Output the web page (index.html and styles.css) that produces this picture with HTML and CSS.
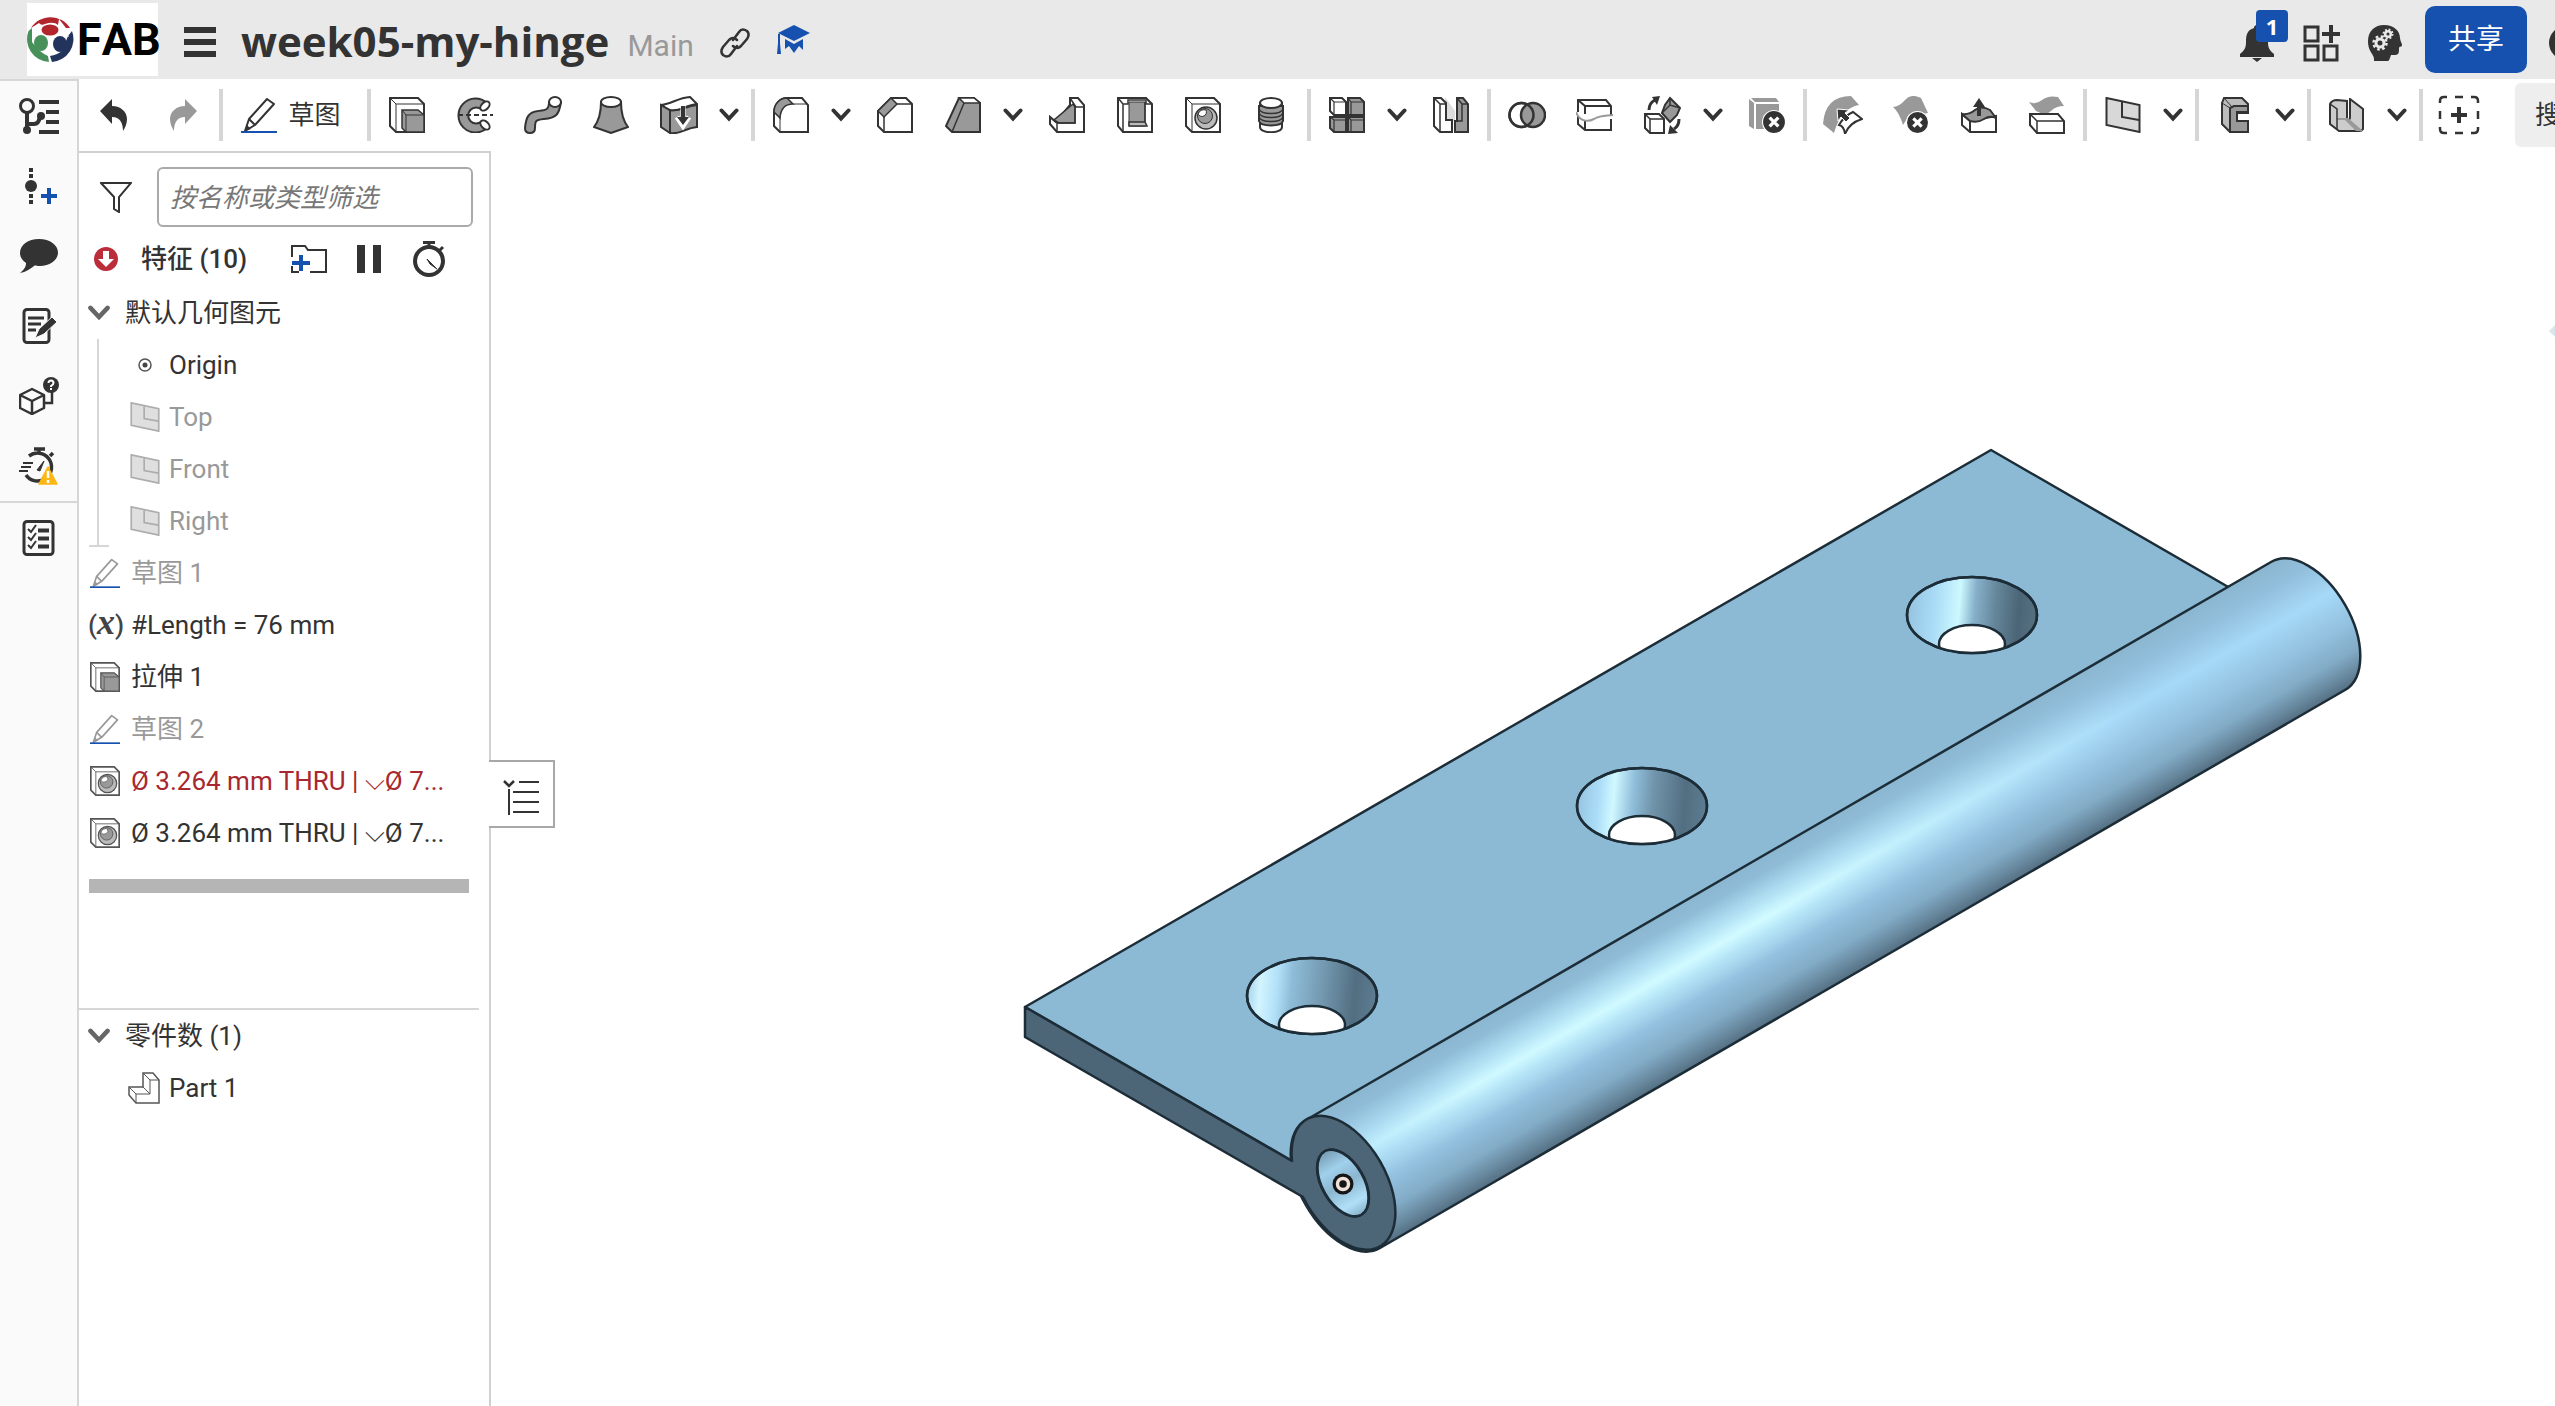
FILE: index.html
```html
<!DOCTYPE html>
<html lang="zh-CN">
<head>
<meta charset="utf-8">
<meta name="viewport" content="width=device-width, initial-scale=1">
<title>week05-my-hinge | Main</title>
<link rel="stylesheet" href="styles.css">
</head>
<body>
<svg class="defs" aria-hidden="true">
  <symbol id="chev" viewBox="0 0 20 14"><path d="M2.500 2.500l7.500 8 7.500-8" fill="none" stroke="currentColor" stroke-width="4" stroke-linecap="round"/></symbol>
  <symbol id="pencil" viewBox="0 0 36 36"><path d="M4 34L8 22 26 2l7 5L14 28zM8 22l6 6M26 2l7 5" fill="#fff" stroke="currentColor" stroke-width="2" stroke-linejoin="round"/><path d="M4 34l2-6 4 4z" fill="currentColor"/><path class="pencil-base" d="M0 35h36" stroke-width="2"/></symbol>
  <symbol id="extrude" viewBox="0 0 36 36"><path d="M1 1h28l6 6v28H7l-6-6z" fill="#fff" stroke="currentColor" stroke-width="2"/><path d="M1 1l6 6h28M7 7v28" fill="none" stroke="currentColor"/><path d="M13 13h16l6 5v17H17l-4-4z" fill="#999" stroke="currentColor" stroke-width="1.500"/><path d="M13 13l4 5h18M17 18v17" fill="none" stroke="currentColor"/></symbol>
  <symbol id="hole" viewBox="0 0 36 36"><path d="M1 1h28l6 6v28H7l-6-6z" fill="#fff" stroke="currentColor" stroke-width="2"/><path d="M1 1l6 6h28M7 7v28" fill="none" stroke="currentColor"/><ellipse cx="21" cy="21" rx="11" ry="11" fill="#bbb" stroke="currentColor" stroke-width="1.500"/><circle cx="20" cy="19" r="7.500" fill="#999" stroke="currentColor"/><path d="M13 17a4 4 0 0 0 8-4 7 7 0 0 0-8 4z" fill="#fff" stroke="currentColor"/></symbol>
  <symbol id="plane" viewBox="0 0 36 36"><path d="M1.500 1l33 7v27l-33-7z" fill="#d8d8d8" stroke="currentColor" stroke-width="2"/><path d="M17 5v15l17 3" fill="none" stroke="currentColor" stroke-width="2"/></symbol>
  <symbol id="xbadge" viewBox="0 0 22 22"><circle cx="11" cy="11" r="11" fill="#fff"/><circle cx="11" cy="11" r="10" fill="#333"/><path d="M7 7l8 8M15 7l-8 8" stroke="#fff" stroke-width="3"/></symbol>
</svg>

<header class="topbar">
  <a class="logo" href="#" aria-label="FAB">
    <svg width="47" height="47" viewBox="0 0 47 47" aria-hidden="true"><circle cx="23.500" cy="23.500" r="22.500" fill="#fff"/><path d="M4 12A23 23 0 0 1 43 12L39 12 32 3 31 9Q27 5 18 8Q14 10 12 7z" fill="#b3252c"/><ellipse cx="23" cy="14" rx="8.500" ry="5.500" fill="#b3252c"/><path d="M1.500 15A23 23 0 0 0 22 46L21 40Q12 36 5 26L5 12z" fill="#47905a"/><ellipse cx="14" cy="27" rx="7" ry="8" fill="#47905a"/><path d="M45 15A23 23 0 0 1 25 46L23 40Q30 39 35 35L41 20z" fill="#23345c"/><ellipse cx="33" cy="28" rx="7" ry="8" fill="#23345c"/><path d="M37 11l5 10-7-3z" fill="#fff"/></svg>
    <span>FAB</span>
  </a>
  <button class="plain menu" aria-label="菜单"><svg width="32" height="32" viewBox="0 0 32 32"><path d="M0 4h32M0 16h32M0 28h32" stroke="#333" stroke-width="6"/></svg></button>
  <h1>week05-my-hinge</h1>
  <span class="workspace">Main</span>
  <button class="plain link" aria-label="复制链接"><svg width="30" height="30" viewBox="0 0 30 30" fill="none" stroke="#333" stroke-width="2.500" stroke-linecap="round"><path d="M13 12l6-8c2-3 5-3 8-1 2 2 2 5 0 8l-6 7c-3 3-6 2-8 0"/><path d="M17 18l-6 8c-2 3-5 3-8 1-2-2-2-5 0-8l6-7c3-3 6-2 8 0"/></svg></button>
  <button class="plain learn" aria-label="学习中心"><svg width="34" height="30" viewBox="0 0 34 30" fill="#1651b0"><path d="M17 0l16 8-16 8L1 8zM8 14l9 5 9-5v11l-4-4-5 7-5-7-4 3zM1 9h2v9l1 11H0l1-11z"/></svg></button>

  <div class="account">
    <button class="plain bell" aria-label="通知"><svg width="34" height="38" viewBox="0 0 34 38" fill="#333"><path d="M17 1c3 0 3 3 3 3 7 2 8 7 8 14 0 5 1 8 6 12v3H0v-3c5-4 6-7 6-12 0-7 1-12 8-14 0 0 0-3 3-3zM12 34h10l-5 4z"/></svg><span class="badge">1</span></button>
    <button class="plain apps" aria-label="应用"><svg width="38" height="38" viewBox="0 0 38 38" fill="none" stroke="#333" stroke-width="3"><path d="M3 3h13v14H3zM3 22h13v14H3zM22 22h13v14H22z"/><path d="M29 1v18M20 10h18" stroke-width="4"/></svg></button>
    <button class="plain ai" aria-label="AI 顾问"><svg width="34" height="38" viewBox="0 0 34 38"><path d="M6 37c1-7-6-8-6-20C0 7 7 1 16 1c10 0 16 6 16 13 0 3 2 5 2 7 0 3-3 0-3 4 0 6-1 6-8 6-1 3-2 6-3 6z" fill="#333"/><circle cx="12" cy="19" r="4" fill="none" stroke="#e9e9e9" stroke-width="3"/><circle cx="12" cy="19" r="6.500" fill="none" stroke="#e9e9e9" stroke-width="2.500" stroke-dasharray="2.600 2.500"/><circle cx="20" cy="10" r="2.800" fill="none" stroke="#e9e9e9" stroke-width="2.500"/><circle cx="20" cy="10" r="4.500" fill="none" stroke="#e9e9e9" stroke-width="2" stroke-dasharray="1.800 1.740"/></svg></button>
    <button class="share">共享</button>
    <button class="avatar" aria-label="帮助"></button>
  </div>
</header>

<div class="workarea">
  <nav class="rail" aria-label="侧栏">
    <button class="plain" aria-label="版本与历史"><svg width="40" height="36" viewBox="0 0 40 36" fill="none" stroke="#333"><circle cx="8" cy="8" r="6.500" stroke-width="3"/><path d="M8 15v17M8 26h7q5 0 6-8M20 4h20M27 14h13M27 24h13M20 34h20" stroke-width="4"/><circle cx="8" cy="32" r="4" fill="#333" stroke="none"/><circle cx="22" cy="18" r="4" fill="#333" stroke="none"/></svg></button>
    <button class="plain" aria-label="创建版本"><svg width="40" height="36" viewBox="0 0 40 36"><path d="M12 0v36" stroke="#333" stroke-width="4" stroke-dasharray="4 2 4 16"/><circle cx="12" cy="18" r="6" fill="#333"/><path d="M22 28h16M30 20v16" stroke="#1651b0" stroke-width="4"/></svg></button>
    <button class="plain" aria-label="评论"><svg width="40" height="36" viewBox="0 0 40 36"><path d="M20 1c11 0 19 6 19 13.500S31 28 21 28c-4 0-5-1-6 0-4 3-8 6-14 7 5-4 6-7 6-10-4-3-6-6-6-10C1 7 9 1 20 1z" fill="#333"/></svg></button>
    <button class="plain" aria-label="注释"><svg width="40" height="36" viewBox="0 0 40 36" fill="none" stroke="#333"><rect x="5" y="1.500" width="25" height="33" rx="3" stroke-width="3"/><path d="M9 10h16M9 16h13M9 22h8" stroke-width="3"/><path d="M16 30l4-9 13-12 5 5-13 12z" fill="#333" stroke="#fafafa" stroke-width="1"/></svg></button>
    <button class="plain" aria-label="配置"><svg width="40" height="38" viewBox="0 0 40 38" fill="none" stroke="#333"><path d="M1 18l12-6 12 6v13l-12 6-12-6zM1 18l12 6 12-6M13 24v13" stroke-width="2.500" stroke-linejoin="round"/><path d="M26 26h7V14" stroke-width="2.500"/><circle cx="32" cy="8" r="8" fill="#333" stroke="none"/><path d="M29.500 6q0-2.500 2.500-2.500T34.500 6q0 1.500-2.500 3v1M32 11v2" stroke="#fff" stroke-width="2"/></svg></button>
    <button class="plain" aria-label="性能"><svg width="40" height="38" viewBox="0 0 40 38" fill="none" stroke="#333"><path d="M7 28a14 14 0 1 0 3-19M20 1v6M15 2h11M31 9l3-3" stroke-width="3.500"/><path d="M4 16h10M2 20h10M0 24h9" stroke-width="2"/><path d="M18 23l7-9-4 10z" fill="#333"/><path d="M29 20l9 17H20z" fill="#fcb713" stroke="#fcb713" stroke-width="1.500" stroke-linejoin="round"/><path d="M29 24v7M29 33v3" stroke="#fff" stroke-width="2.500"/></svg></button>
    <hr>
    <button class="plain" aria-label="检查清单"><svg width="40" height="36" viewBox="0 0 40 36" fill="none" stroke="#333"><rect x="5" y="1.500" width="29" height="33" rx="3" stroke-width="3"/><path d="M9 9l3 3 5-7M9 17l3 3 5-7M9 25l3 3 5-7" stroke-width="2"/><path d="M19 10.500h11M19 18.500h11M19 26.500h11" stroke-width="4"/></svg></button>
  </nav>

  <div class="studio">
    <div class="toolbar" role="toolbar" aria-label="特征工具">
      <button class="tool wide" aria-label="撤消"><svg width="28" height="32" viewBox="0 0 28 32"><path d="M0 12L12 0v7c9 0 15 6 15 13 0 5-2 9-4 12 0-8-3-14-11-14v7z" fill="#333"/></svg></button>
      <button class="tool wide" aria-label="恢复"><svg width="28" height="32" viewBox="0 0 28 32"><path d="M28 12L16 0v7C7 7 1 13 1 20c0 5 2 9 4 12 0-8 3-14 11-14v7z" fill="#999"/></svg></button>
      <i class="sep"></i>
      <button class="tool sketch"><svg width="36" height="36"><use href="#pencil"/></svg><span>草图</span></button>
      <i class="sep"></i>
      <button class="tool" aria-label="拉伸"><svg width="36" height="36"><use href="#extrude"/></svg></button>
      <button class="tool" aria-label="旋转"><svg width="36" height="36" viewBox="0 0 36 36" stroke="#333" stroke-width="2"><path d="M30 6A17 17 0 1 0 30 31L25 24A8 8 0 1 1 25 13z" fill="#999"/><ellipse cx="28" cy="9" rx="3.500" ry="5.500" transform="rotate(45 28 9)" fill="#fff"/><ellipse cx="28" cy="28" rx="3.500" ry="5.500" transform="rotate(-45 28 28)" fill="#fff"/><path d="M1 18h35" stroke-dasharray="5 3"/></svg></button>
      <button class="tool" aria-label="扫掠"><svg width="38" height="38" viewBox="0 0 38 38" stroke="#333" stroke-width="2"><path d="M25 6c0 8-3 8-11 9C4 16 2 22 1 32c0 3 2 5 5 5s5-2 5-5c0-8 1-8 9-9 12-1 15-4 17-17z" fill="#999"/><ellipse cx="31" cy="6" rx="6" ry="5" fill="#fff"/></svg></button>
      <button class="tool" aria-label="放样"><svg width="36" height="38" viewBox="0 0 36 38" stroke="#333" stroke-width="2"><path d="M8 6c0 14-3 20-7 25l17 6 17-6C31 26 28 20 28 6z" fill="#999"/><ellipse cx="18" cy="6" rx="10" ry="5" fill="#fff"/></svg></button>
      <button class="tool" aria-label="加厚"><svg width="38" height="38" viewBox="0 0 38 38" stroke="#333" stroke-width="2"><path d="M1 9l9 5v23l-9-6zM10 14c10 2 15-4 27-5v22c-12 1-17 8-27 6z" fill="#999"/><path d="M1 9C12 8 17 2 30 1l7 7c-12 1-17 8-27 6z" fill="#fff"/><path d="M23 10v16M17 21l6 9 6-9" fill="none" stroke="#fff" stroke-width="5"/><path d="M21 10h4v11h4l-6 8-6-8h4z" fill="#333" stroke="none"/></svg></button>
      <button class="tool more" aria-label="更多"><svg width="20" height="14"><use href="#chev"/></svg></button>
      <i class="sep"></i>
      <button class="tool" aria-label="圆角"><svg width="36" height="36" viewBox="0 0 36 36" stroke="#333" stroke-width="2"><path d="M14 1h15l6 7v27H7l-6-6V16C1 7 7 1 14 1z" fill="#fff"/><path d="M14 1l6 6Q8 7 7 21l-6-6C1 7 7 1 14 1z" fill="#999" stroke-width="1.500"/><path d="M20 7h14M7 21v14" stroke-width="1" fill="none"/></svg></button>
      <button class="tool more" aria-label="更多"><svg width="20" height="14"><use href="#chev"/></svg></button>
      <button class="tool" aria-label="倒角"><svg width="36" height="36" viewBox="0 0 36 36" stroke="#333" stroke-width="2"><path d="M14 1h15l6 6v28H7l-6-6V14z" fill="#fff"/><path d="M14 1l6 6L7 20l-6-6z" fill="#999" stroke-width="1.500"/><path d="M20 7h14M7 20v15" stroke-width="1.500"/></svg></button>
      <button class="tool" aria-label="拔模"><svg width="36" height="36" viewBox="0 0 36 36" stroke="#333" stroke-width="2"><path d="M14 1h15l6 5v29H7l-6-6z" fill="#999"/><path d="M14 1h15l6 5H19z" fill="#fff" stroke-width="1.500"/><path d="M19 6L7 35" stroke-width="1.500"/></svg></button>
      <button class="tool more" aria-label="更多"><svg width="20" height="14"><use href="#chev"/></svg></button>
      <button class="tool" aria-label="加强筋"><svg width="36" height="36" viewBox="0 0 36 36" stroke="#333" stroke-width="2"><path d="M21 1h8l6 7v27H8l-7-8v-7l6 5 14-17z" fill="#fff"/><path d="M24 7L5 23l5 3h16V10z" fill="#999" stroke-width="1.500"/><path d="M8 26h18V10h8M1 20l7 6v9M21 1l6 9" fill="none" stroke-width="1.500"/></svg></button>
      <button class="tool" aria-label="抽壳"><svg width="36" height="36" viewBox="0 0 36 36" stroke="#333" stroke-width="2"><path d="M1 1h28l6 6v28H6l-5-6z" fill="#fff"/><path d="M1 1l5 6h5V3h18v4h6M6 7v28" fill="none" stroke-width="1.500"/><path d="M12 5h16v24h-16z" fill="#999" stroke-width="1"/><path d="M12 25h16l2 4H12zM28 5v20" fill="#bbb" stroke-width="1.500"/></svg></button>
      <button class="tool" aria-label="孔"><svg width="36" height="36"><use href="#hole"/></svg></button>
      <button class="tool" aria-label="外螺纹"><svg width="26" height="36" viewBox="0 0 26 36" stroke="#333" stroke-width="2" fill="#fff"><path d="M2 6v24c0 7 22 7 22 0V6z"/><path d="M1 9v15c2 6 22 6 24 0V9z" fill="#999"/><path d="M1 12c2 6 22 6 24 0M1 16c2 6 22 6 24 0M1 20c2 6 22 6 24 0" fill="none" stroke-width="1.500"/><ellipse cx="13" cy="6" rx="11" ry="5"/></svg></button>
      <i class="sep"></i>
      <button class="tool" aria-label="阵列"><svg width="36" height="36" viewBox="0 0 36 36" stroke="#333" stroke-width="2"><path d="M1 1h12l4 4v13H5l-4-4z" fill="#fff"/><path d="M19 1h12l4 4v13H19zM1 20h16v15H5l-4-4zM19 20h16v15H19z" fill="#999"/><path d="M1 1l4 4h12M5 5v13M19 1l3 4h13M22 5v13M1 20l4 3h12M5 23v12M19 20l3 3h13M22 23v12" fill="none" stroke-width="1.200"/></svg></button>
      <button class="tool more" aria-label="更多"><svg width="20" height="14"><use href="#chev"/></svg></button>
      <button class="tool" aria-label="镜像"><svg width="36" height="36" viewBox="0 0 36 36" stroke="#333" stroke-width="2"><path d="M12 0l10 14v10H12z" fill="#ddd" stroke="none"/><path d="M1 1h7l5 5v17h6v12H7l-6-6z" fill="#fff"/><path d="M24 1h6l5 6v28H22V24h2z" fill="#999"/><path d="M1 1l6 6h6M7 7v28M24 1l5 6h6M29 7v17h-5" fill="none" stroke-width="1.500"/></svg></button>
      <i class="sep"></i>
      <button class="tool" aria-label="布尔"><svg width="38" height="30" viewBox="0 0 38 30" stroke="#333" stroke-width="2.500"><circle cx="13.500" cy="15" r="12" fill="#fff"/><circle cx="25" cy="15" r="12" fill="#999"/><circle cx="13.500" cy="15" r="12" fill="none"/></svg></button>
      <button class="tool" aria-label="分割"><svg width="38" height="34" viewBox="0 0 38 34" stroke="#333" stroke-width="2" fill="none"><path d="M2 14V2h28l5 6v9M35 21v11H9l-7-6v-8M2 2l7 6h26M9 8v8M9 23v9"/><path d="M0 14c4 10 12 10 18 7 7-4 11-3 19-4" stroke="#999"/></svg></button>
      <button class="tool" aria-label="变换"><svg width="38" height="38" viewBox="0 0 38 38" stroke="#333" stroke-width="2"><path d="M1 18h14l5 5v14H6l-5-5z" fill="#fff"/><path d="M1 18l5 5h14M6 23v14" fill="none" stroke-width="1.500"/><path d="M26 2l10 10-3 7-7 7-8-9 3-8z" fill="#999"/><path d="M18 17l8-8 10 3M26 9V2" fill="none" stroke-width="1.500"/><path d="M5 14q0-7 6-10" fill="none" stroke-width="3"/><path d="M8 1l8-1-3 9z" fill="#333" stroke="none"/><path d="M35 23q0 7-5 10" fill="none" stroke-width="3"/><path d="M24 38l2-9 8 8z" fill="#333" stroke="none"/></svg></button>
      <button class="tool more" aria-label="更多"><svg width="20" height="14"><use href="#chev"/></svg></button>
      <button class="tool" aria-label="删除零件"><svg width="36" height="36" viewBox="0 0 36 36"><path d="M0 2l5 4v26l-5-3zM2 1h25l3 4H6zM7 7h23v25H7z" fill="#999"/><use href="#xbadge" x="13" y="13" width="24" height="24"/></svg></button>
      <i class="sep"></i>
      <button class="tool" aria-label="修改圆角"><svg width="40" height="38" viewBox="0 0 40 38"><path d="M0 28Q2 0 28 0l8 9Q18 12 11 37z" fill="#999"/><path d="M22 38q-1-8-6-9 5-9 14-13l9 7q-13 4-17 15z" fill="#fff" stroke="#333" stroke-width="2"/><path d="M14 13l12 1-4 3 5 5-4 4-5-5-3 4z" fill="#333" stroke="#fff"/></svg></button>
      <button class="tool" aria-label="删除面"><svg width="36" height="38" viewBox="0 0 36 38"><path d="M0 11q6 0 12-7T28 2l7 15-20 4-5 8Q6 16 0 11z" fill="#999"/><use href="#xbadge" x="13" y="15" width="23" height="23"/></svg></button>
      <button class="tool" aria-label="移动面"><svg width="36" height="36" viewBox="0 0 36 36" stroke="#333" stroke-width="2"><path d="M1 17l8 7 26-5v16H9l-8-7z" fill="#fff"/><path d="M9 23v12"/><path d="M1 17q7 1 13-4t15 0l6 8q-6-3-12 1T9 24z" fill="#999"/><path d="M18 19V9" stroke-width="4"/><path d="M12 10l6-9 6 9z" fill="#333" stroke="none"/></svg></button>
      <button class="tool" aria-label="替换面"><svg width="36" height="38" viewBox="0 0 36 38" stroke="#333" stroke-width="2"><path d="M0 6q7 3 13-2t16-3l6 9q-8 0-13 5t-15 0z" fill="#999" stroke="none"/><path d="M1 18h28l6 7v12H8l-7-8z" fill="#fff"/><path d="M1 18l7 7h27M8 25v12" fill="none" stroke-width="1.500"/></svg></button>
      <i class="sep"></i>
      <button class="tool" aria-label="平面"><svg width="36" height="36"><use href="#plane"/></svg></button>
      <button class="tool more" aria-label="更多"><svg width="20" height="14"><use href="#chev"/></svg></button>
      <i class="sep"></i>
      <button class="tool" aria-label="框架"><svg width="28" height="36" viewBox="0 0 28 36" stroke="#333" stroke-width="2"><path d="M1 6l2-5h18l6 6v9H16v9h11v10H9l-8-8z" fill="#bbb"/><path d="M9 11l4-2h14v6H16v9h11v11H9z" fill="#999"/><path d="M1 6l8 5M3 1l8 9" stroke-width="1"/></svg></button>
      <button class="tool more" aria-label="更多"><svg width="20" height="14"><use href="#chev"/></svg></button>
      <i class="sep"></i>
      <button class="tool" aria-label="钣金"><svg width="36" height="34" viewBox="0 0 36 34" stroke="#333" stroke-width="2"><path d="M1 6q2-4 7-4l10 1v18q3 2 3-2V1l13 10v20q-1 2-4 2H10l-9-7z" fill="#ccc"/><path d="M8 20h11l15 13H27L16 22H8z" fill="#999" stroke="none"/><path d="M1 6l7 5v20" fill="none" stroke-width="1.500"/></svg></button>
      <button class="tool more" aria-label="更多"><svg width="20" height="14"><use href="#chev"/></svg></button>
      <i class="sep"></i>
      <button class="tool" aria-label="添加自定义特征"><svg width="42" height="40" viewBox="0 0 42 40" fill="none" stroke="#333" stroke-width="2.500"><path d="M2 8V6q0-4 4-4h3M17 2h8M33 2h3q4 0 4 4v2M40 16v8M40 32v2q0 4-4 4h-3M25 38h-8M9 38H6q-4 0-4-4v-2M2 24v-8"/><path d="M13 20h16M21 12v16" stroke-width="4"/></svg></button>
      <input class="search" type="search" placeholder="搜索工具…" aria-label="搜索工具">
    </div>

    <div class="content">
      <aside class="panel">
        <div class="features">
          <div class="filter">
            <svg width="32" height="32" viewBox="0 0 32 32" fill="none" stroke="#333" stroke-width="2"><path d="M1 2h30L19 16v15l-5-3V16z"/></svg>
            <input type="text" placeholder="按名称或类型筛选" aria-label="按名称或类型筛选">
          </div>
          <div class="heading">
            <svg width="24" height="24" viewBox="0 0 24 24"><circle cx="12" cy="12" r="12" fill="#bb2d3b"/><path d="M9 4h6v8h5l-8 8-8-8h5z" fill="#fff"/></svg>
            <h2>特征 (10)</h2>
            <button class="plain folder" aria-label="新建文件夹"><svg width="36" height="28" viewBox="0 0 36 28" fill="none"><path d="M1 12V1h13l3 4h18v22H19M1 21v6h7" stroke="#333" stroke-width="2"/><path d="M1 18h18M10 10v16" stroke="#1651b0" stroke-width="4"/></svg></button>
            <button class="plain pause" aria-label="暂停"><svg width="24" height="28" viewBox="0 0 24 28"><path d="M4 0v28M20 0v28" stroke="#333" stroke-width="8"/></svg></button>
            <button class="plain" aria-label="再生时间"><svg width="32" height="36" viewBox="0 0 32 36" fill="none" stroke="#333"><circle cx="16" cy="20" r="14" stroke-width="4"/><path d="M10 1.500h12M16 1v5M26 10l4-4" stroke-width="3"/><path d="M14 18l10 10-7-5z" fill="#333"/></svg></button>
          </div>
          <button class="row group" aria-expanded="true"><svg width="26" height="16"><use href="#chev"/></svg>默认几何图元</button>
          <ul class="tree geometry">
            <li class="row"><svg class="ic" width="30" height="30" viewBox="0 0 30 30"><circle cx="15" cy="15" r="6" fill="none" stroke="#555" stroke-width="1.500"/><circle cx="15" cy="15" r="2.500" fill="#444"/></svg>Origin</li>
            <li class="row off"><svg class="ic" width="30" height="30"><use href="#plane"/></svg>Top</li>
            <li class="row off"><svg class="ic" width="30" height="30"><use href="#plane"/></svg>Front</li>
            <li class="row off"><svg class="ic" width="30" height="30"><use href="#plane"/></svg>Right</li>
          </ul>
          <ul class="tree">
            <li class="row off"><svg class="ic" width="30" height="30"><use href="#pencil"/></svg>草图 1</li>
            <li class="row"><span class="var">(<i>x</i>)</span>#Length = 76 mm</li>
            <li class="row"><svg class="ic" width="30" height="30"><use href="#extrude"/></svg>拉伸 1</li>
            <li class="row off"><svg class="ic" width="30" height="30"><use href="#pencil"/></svg>草图 2</li>
            <li class="row error"><svg class="ic" width="30" height="30"><use href="#hole"/></svg>Ø 3.264 mm THRU | ⌵Ø 7...</li>
            <li class="row"><svg class="ic" width="30" height="30"><use href="#hole"/></svg>Ø 3.264 mm THRU | ⌵Ø 7...</li>
          </ul>
          <div class="rollback"></div>
        </div>
        <div class="parts">
          <button class="row group" aria-expanded="true"><svg width="26" height="16"><use href="#chev"/></svg>零件数 (1)</button>
          <ul class="tree">
            <li class="row part"><svg class="ic" width="32" height="32" viewBox="0 0 32 32" fill="#fff" stroke="#555" stroke-width="1.500"><path d="M15 1h10l6 7v23H8l-7-8v-8h14z"/><path d="M15 1l7 7h9M22 8v14H8l-7-7M15 15l7 7M8 22v9" fill="none" stroke-width="1"/></svg>Part 1</li>
          </ul>
        </div>
        <button class="flyout" aria-label="展开列表"><svg width="36" height="36" viewBox="0 0 36 36" fill="none" stroke="#333" stroke-width="2"><path d="M1 2l5 5 5-5" stroke-width="2.500"/><path d="M6 10v26M16 3h20M10 13h26M10 23h26M10 33h26"/></svg></button>
      </aside>

      <main class="canvas">
        <svg class="model" viewBox="491 153 2064 1253" preserveAspectRatio="xMinYMin meet" role="img" aria-label="铰链模型">
          <defs>
            <linearGradient id="barrel" gradientUnits="userSpaceOnUse" x1="1306" y1="1119" x2="1380" y2="1247">
              <stop offset="0" stop-color="#8bb6d0"/><stop offset=".16" stop-color="#92bfdc"/><stop offset=".38" stop-color="#a6d9f8"/><stop offset=".62" stop-color="#93c1df"/><stop offset=".8" stop-color="#82abc6"/><stop offset=".92" stop-color="#68899f"/><stop offset="1" stop-color="#546f82"/>
            </linearGradient>
            <linearGradient id="shine" gradientUnits="userSpaceOnUse" x1="1306" y1="1119" x2="1380" y2="1247">
              <stop offset=".1" stop-color="#ccf8ff" stop-opacity="0"/><stop offset=".26" stop-color="#ccf8ff" stop-opacity=".5"/><stop offset=".37" stop-color="#d2fbff"/><stop offset=".47" stop-color="#ccf8ff" stop-opacity=".5"/><stop offset=".62" stop-color="#ccf8ff" stop-opacity="0"/>
            </linearGradient>
            <linearGradient id="along" gradientUnits="userSpaceOnUse" x1="1343" y1="1183" x2="2308" y2="625">
              <stop offset="0" stop-color="#777"/><stop offset=".15" stop-color="#eee"/><stop offset=".45" stop-color="#fff"/><stop offset=".65" stop-color="#888"/><stop offset=".85" stop-color="#000"/>
            </linearGradient>
            <mask id="fade" maskUnits="userSpaceOnUse" x="1200" y="500" width="1300" height="800"><path d="M1200 500h1300v800H1200z" fill="url(#along)"/></mask>
            <linearGradient id="cone1" x2="1" y2=".05"><stop offset="0" stop-color="#9dcbe7"/><stop offset=".12" stop-color="#d2f5ff"/><stop offset=".25" stop-color="#b2e0f8"/><stop offset=".36" stop-color="#8fbdd9"/><stop offset=".6" stop-color="#7398af"/><stop offset=".85" stop-color="#526e81"/><stop offset="1" stop-color="#5c7b90"/></linearGradient>
            <linearGradient id="cone2" x2="1" y2=".05"><stop offset="0" stop-color="#93c0dc"/><stop offset=".18" stop-color="#aadcf8"/><stop offset=".3" stop-color="#d0f8ff"/><stop offset=".45" stop-color="#90bedb"/><stop offset=".6" stop-color="#7195ab"/><stop offset=".85" stop-color="#526e81"/><stop offset="1" stop-color="#5c7b90"/></linearGradient>
            <linearGradient id="cone3" x2="1" y2=".05"><stop offset="0" stop-color="#93c0dc"/><stop offset=".22" stop-color="#a8daf6"/><stop offset=".42" stop-color="#ccf8ff"/><stop offset=".54" stop-color="#86b0ca"/><stop offset=".7" stop-color="#65869a"/><stop offset=".88" stop-color="#4b6576"/><stop offset="1" stop-color="#54707f"/></linearGradient>
            <linearGradient id="bore" gradientUnits="userSpaceOnUse" x1="1325" y1="1152" x2="1362" y2="1214"><stop offset="0" stop-color="#7ba0b8"/><stop offset=".25" stop-color="#a0d0ec"/><stop offset=".5" stop-color="#8bb6d0"/><stop offset=".8" stop-color="#b0e0f8"/><stop offset="1" stop-color="#86afc8"/></linearGradient>
            <clipPath id="rim"><ellipse rx="65" ry="38"/></clipPath>
          </defs>
          <g stroke="#1d2d38" stroke-width="2.500" stroke-linejoin="round">
            <path d="M1025 1006L1991 449 2230 587 2260 620 1330 1170 1292 1160z" fill="#8cbad5"/>
            <path d="M1306 1119L2271 561A73.400 42.400 60 0 1 2345 689L1380 1247A73.400 42.400 60 0 1 1306 1119z" fill="url(#barrel)"/>
            <path d="M1306 1119L2271 561A73.400 42.400 60 0 1 2345 689L1380 1247A73.400 42.400 60 0 1 1306 1119z" fill="url(#shine)" mask="url(#fade)" stroke="none"/>
            <path d="M1025 1006L1292 1160A73.400 42.400 60 1 1 1303 1196L1025 1036z" fill="#4d6677"/>
            <ellipse cx="1343" cy="1182" rx="36.700" ry="21.200" transform="rotate(60 1343 1182)" fill="#8cbad5"/>
            <path d="M1324.700 1150.200A36.700 21.200 60 0 1 1361.300 1213.800A36.700 21.200 60 0 1 1324.700 1150.200z" fill="url(#bore)"/>
            <g transform="translate(1312 995)"><ellipse rx="65" ry="38" fill="url(#cone1)"/><ellipse cy="29" rx="33" ry="19" fill="#fff" clip-path="url(#rim)"/><ellipse rx="65" ry="38" fill="none"/></g>
            <g transform="translate(1642 805)"><ellipse rx="65" ry="38" fill="url(#cone2)"/><ellipse cy="29" rx="33" ry="19" fill="#fff" clip-path="url(#rim)"/><ellipse rx="65" ry="38" fill="none"/></g>
            <g transform="translate(1972 614)"><ellipse rx="65" ry="38" fill="url(#cone3)"/><ellipse cy="29" rx="33" ry="19" fill="#fff" clip-path="url(#rim)"/><ellipse rx="65" ry="38" fill="none"/></g>
          </g>
          <circle cx="1343" cy="1183" r="10.500" fill="#151515"/><circle cx="1343" cy="1183" r="5.500" fill="#151515" stroke="#eee0da" stroke-width="3.500"/>
          <path d="M2549 330l7-7v14z" fill="#dbe5ec"/>
        </svg>
      </main>
    </div>
  </div>
</div>
</body>
</html>
```

FILE: styles.css
```css
* { box-sizing: border-box; }

body {
  margin: 0;
  height: 100vh;
  display: flex;
  flex-direction: column;
  overflow: hidden;
  background: #fff;
  color: #333;
  font: 26px/36px Roboto, "Noto Sans CJK SC", sans-serif;
}

button, input {
  font: inherit;
  color: inherit;
}

button {
  border: 0;
  padding: 0;
  background: none;
  cursor: pointer;
}

svg { flex: none; display: block; }
h1, h2, ul { margin: 0; padding: 0; list-style: none; }
.defs { position: absolute; width: 0; height: 0; }
.plain { display: flex; align-items: center; justify-content: center; flex: none; }

/* Document bar */
.topbar {
  flex: none;
  display: flex;
  align-items: center;
  height: 79px;
  padding: 0 0 0 27px;
  background: #e9e9e9;
  overflow: hidden;
}

.logo {
  flex: none;
  display: flex;
  align-items: center;
  gap: 3px;
  width: 131px;
  height: 73px;
  background: #fff;
  color: #000;
  font-size: 45px;
  font-weight: 700;
  font-kerning: none;
  text-decoration: none;
}

.menu { margin: 4px 0 0 26px; }

h1 {
  margin-left: 25px;
  font: 700 42px/60px "Open Sans", "Noto Sans", sans-serif;
  padding-top: 3px;
  white-space: nowrap;
}

.workspace {
  margin-left: 18px;
  padding-top: 12px;
  color: #999;
  font-size: 30px;
}

.link { margin: 6px 0 0 26px; }
.learn { margin: 0 0 0 27px; }

.account {
  flex: none;
  display: flex;
  align-items: center;
  margin: 0 -28px 0 auto;
}

.bell { position: relative; }

.badge {
  position: absolute;
  left: 16px;
  top: -14px;
  width: 32px;
  height: 32px;
  border-radius: 4px;
  background: #1651b0;
  color: #fff;
  font: 700 22px/32px "Noto Sans", sans-serif;
}

.bell, .apps, .ai { margin-top: 7px; }
.apps { margin-left: 28px; }
.ai { margin-left: 28px; }

.share {
  align-self: flex-start;
  width: 102px;
  height: 67px;
  margin-left: 23px;
  border-radius: 10px;
  background: #1651b0;
  color: #fff;
  font-size: 28px;
}

.avatar {
  width: 34px;
  height: 34px;
  margin: 6px 0 0 22px;
  border-radius: 50%;
  background: #333;
}

/* Left rail */
.workarea { flex: 1; display: flex; min-height: 0; }

.rail {
  flex: none;
  width: 79px;
  border: solid #d6d6d6;
  border-width: 2px 2px 0 0;
  background: #fafafa;
}

.rail .plain { width: 77px; height: 70px; }
.rail hr { height: 2px; margin: 0; border: 0; background: #d6d6d6; }

.studio { flex: 1; display: flex; flex-direction: column; min-width: 0; }

/* Feature toolbar */
.toolbar {
  flex: none;
  display: flex;
  align-items: center;
  height: 72px;
  overflow: hidden;
}

.tool {
  flex: none;
  display: flex;
  align-items: center;
  justify-content: center;
  width: 68px;
  height: 64px;
}

.tool.wide { width: 69px; }
.tool.more { width: 32px; margin-right: 4px; }
.tool.sketch { width: 140px; gap: 11px; padding-right: 8px; }
.sep { flex: none; width: 4px; height: 52px; margin: 0 2px; background: #d6d6d6; }

.pencil-base { stroke: #1651b0; }
.off .pencil-base { stroke: #8aa8d8; }

.search {
  flex: none;
  width: 240px;
  height: 64px;
  margin-left: 22px;
  padding: 0 20px;
  border: 0;
  border-radius: 6px;
  background: #eee;
}

.search::placeholder { color: #333; opacity: 1; }

/* Feature list */
.content { flex: 1; display: flex; min-height: 0; }

.panel {
  position: relative;
  flex: none;
  width: 412px;
  border: solid #d0d0d0;
  border-width: 2px 2px 0 0;
}

.features { height: 857px; margin-right: 10px; border-bottom: 2px solid #d6d6d6; }

.filter {
  display: flex;
  align-items: center;
  gap: 25px;
  padding: 14px 6px 0 21px;
}

.filter input {
  flex: 1;
  min-width: 0;
  height: 60px;
  padding: 2px 11px 0;
  border: 2px solid #aaa;
  border-radius: 6px;
}

.filter input::placeholder { color: #777; font-style: italic; opacity: 1; }

.heading {
  display: flex;
  align-items: center;
  height: 60px;
  padding: 4px 0 0 15px;
}

h2 { width: 150px; margin-left: 23px; font-size: 26px; font-weight: 500; }
.pause { margin: 0 32px 0 30px; }

.row {
  display: flex;
  align-items: center;
  gap: 11px;
  height: 52px;
  padding-left: 11px;
  white-space: nowrap;
}

.group { gap: 13px; padding-left: 7px; color: #333; }
.group svg { color: #666; }
.ic { color: #555; }
.off { color: #999; }
.off .ic { color: #999; }
.error { color: #a8282f; }

.geometry {
  position: relative;
  height: 208px;
  margin: 0 0 0 18px;
  border-left: 2px solid #d6d6d6;
}

.geometry::after {
  content: "";
  position: absolute;
  left: -10px;
  bottom: 0;
  width: 20px;
  height: 2px;
  background: #d6d6d6;
}

.geometry .row { padding-left: 31px; gap: 9px; }
.geometry .off .ic { opacity: .8; }
.part { padding-left: 49px; gap: 9px; }

.var {
  flex: none;
  width: 36px;
  margin: -4px -4px 0 -2px;
  color: #444;
  font-weight: 500;
  text-align: center;
}

.var i { font: italic 700 36px/36px "Liberation Serif", serif; }

.rollback { height: 14px; margin: 20px 10px 0; background: #b5b5b5; }

.flyout {
  position: absolute;
  left: 410px;
  top: 607px;
  width: 66px;
  height: 68px;
  display: flex;
  align-items: center;
  padding: 6px 0 0 14px;
  border: 2px solid #a8a8a8;
  border-left: 0;
  background: #fff;
}

/* Model view */
.canvas { flex: 1; min-width: 0; padding-top: 3px; }
.model { width: 100%; }
```
